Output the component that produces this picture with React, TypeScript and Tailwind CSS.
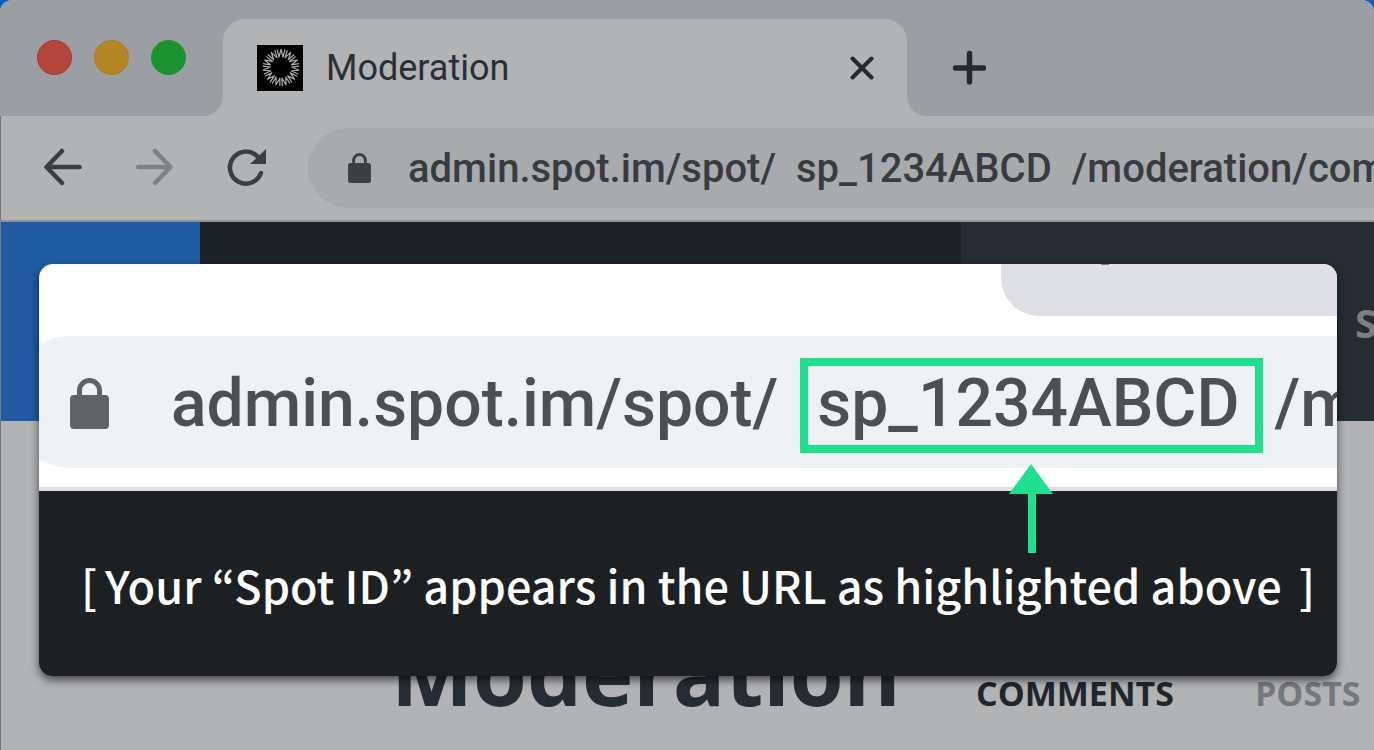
import React from 'react';

const TRAFFIC_LIGHTS = [
  { label: 'Close window', color: 'bg-[#b3453f] border-[#ae3530]' },
  { label: 'Minimize window', color: 'bg-[#b38623] border-[#a87f1e]' },
  { label: 'Zoom window', color: 'bg-[#1b9130] border-[#109a26]' },
];

// ring of eleven W shaped rays, the first one pointing straight up
const RAYS = Array.from({ length: 11 }, (_, i) => (i * 360) / 11);

const Logo = () => (
  <svg viewBox="0 0 46 46" className="size-[46px] bg-black" aria-hidden="true">
    <g fill="none" stroke="#a9aaac" strokeWidth="1.2" strokeLinejoin="round">
      {RAYS.map((angle) => (
        <path
          key={angle}
          d="M20 4.500 22 12 24 4.500 26 12 28 4.500"
          transform={`rotate(${angle} 24 22.500)`}
        />
      ))}
    </g>
  </svg>
);

const Lock = ({ className }: { className: string }) => (
  <svg viewBox="0 0 39 51" className={className} aria-hidden="true">
    <rect x="0" y="17" width="39" height="34" rx="4" fill="currentColor" />
    <path
      d="M9.500 18V12.500a10 10 0 0 1 20 0V18"
      fill="none"
      stroke="currentColor"
      strokeWidth="5"
    />
  </svg>
);

const TabStrip = () => (
  <div className="flex h-[116px] shrink-0 overflow-hidden rounded-t-xl bg-[#b2b3b5]">
    <div className="flex w-[223px] shrink-0 gap-[22px] rounded-br-[20px] bg-[#9b9ea3] pl-[37px] pt-[40px]">
      {TRAFFIC_LIGHTS.map((light) => (
        <button
          key={light.label}
          aria-label={light.label}
          className={`size-[35px] rounded-full border ${light.color}`}
        />
      ))}
    </div>
    <div className="flex w-[684px] shrink-0 bg-[#9b9ea3]">
      <div className="mt-[19px] flex flex-1 items-start rounded-t-[22px] bg-[#b2b3b5] pl-[34px] pr-[33px] pt-[26px]">
        <Logo />
        <span className="ml-[23px] flex-1 text-[36px] leading-[46px] text-[#2a2f34]">
          Moderation
        </span>
        <button aria-label="Close tab" className="mt-[11px]">
          <svg viewBox="0 0 24 24" className="size-6" fill="none" stroke="#262a2e" strokeWidth="4" strokeLinecap="round">
            <path d="M2.500 2.500 21.500 21.500M21.500 2.500 2.500 21.500" />
          </svg>
        </button>
      </div>
    </div>
    <div className="flex-1 rounded-bl-[20px] bg-[#9b9ea3] pl-[45px] pt-[50px]">
      <button aria-label="New tab">
        <svg viewBox="0 0 34 36" className="h-[36px] w-[34px]" fill="none" stroke="#262a2e" strokeWidth="5.500" strokeLinecap="round">
          <path d="M17.500 3.500V32M3.500 18H31.500" />
        </svg>
      </button>
    </div>
  </div>
);

const Toolbar = () => (
  <div className="flex h-[106px] shrink-0 items-start border-b-2 border-l border-b-[#919399] border-l-[#77797c] bg-[#b2b3b5] pt-3">
    <div className="flex h-20 w-[307px] shrink-0 items-center pb-0.5 pl-[42px] text-[#3b3f44]">
      <button aria-label="Back">
        <svg viewBox="0 0 40 38" className="h-[38px] w-10" fill="none" stroke="currentColor" strokeWidth="4.500" strokeLinecap="round" strokeLinejoin="round">
          <path d="M19 3 3.500 19 19 35M4 19H36.500" />
        </svg>
      </button>
      <button aria-label="Forward" className="ml-[52px] text-[#7f8184]">
        <svg viewBox="0 0 40 38" className="h-[38px] w-10" fill="none" stroke="currentColor" strokeWidth="4.500" strokeLinecap="round" strokeLinejoin="round">
          <path d="M20 3 35.500 19 20 35M35 19H3" />
        </svg>
      </button>
      <button aria-label="Reload" className="ml-[51px]">
        <svg viewBox="0 0 41 38" className="h-[38px] w-[41px]" fill="none" stroke="currentColor" strokeWidth="4.500" strokeLinecap="round">
          <path d="M35 25A16 16 0 1 1 31 8" />
          <path d="M40 1V16H24Z" fill="currentColor" stroke="none" />
        </svg>
      </button>
    </div>
    <div className="flex h-20 min-w-0 flex-1 items-center rounded-l-full bg-[#a7abae] pl-10">
      <Lock className="h-[30px] w-[23px] shrink-0 text-[#3d4043]" />
      <input
        aria-label="Address"
        readOnly
        value="admin.spot.im/spot/  sp_1234ABCD  /moderation/comments"
        className="ml-[37px] min-w-0 flex-1 bg-transparent pt-0.5 text-[40px] font-medium text-[#393c3f] outline-none"
      />
    </div>
  </div>
);

const Page = () => (
  <div className="flex flex-1 flex-col border-l border-[#77797c] font-['Open_Sans',sans-serif] font-bold">
    <div className="flex h-[199px] shrink-0">
      <div className="w-[199px] bg-[#205aa1]" />
      <div className="w-[761px] bg-[#1d2226]" />
      <div className="flex flex-1 items-center justify-end overflow-hidden bg-[#252c33] pt-0.5">
        <a href="#settings" className="w-[19px] text-[40px] text-[#7b7e82]">S</a>
      </div>
    </div>
    <div className="flex items-baseline overflow-hidden whitespace-nowrap bg-[#b2b3b5] pl-[390px] pt-[193px]">
      <h1 className="w-[585px] shrink-0 text-[87px] leading-[116px] text-[#252c33]">Moderation</h1>
      <a href="#comments" className="w-[279px] shrink-0 text-[34px] text-[#1f262c]">COMMENTS</a>
      <a href="#posts" className="text-[34px] text-[#75787c]">POSTS</a>
    </div>
  </div>
);

const Arrow = () => (
  <svg viewBox="0 0 44 89" className="absolute left-1/2 top-[98px] h-[89px] w-[44px] -translate-x-1/2" fill="#20e090" aria-hidden="true">
    <path d="M22 0 44 30H27V89H19V30H0Z" />
  </svg>
);

const Callout = () => (
  <section className="absolute left-[39px] right-[37px] top-[264px] overflow-hidden rounded-[14px] bg-[#1c2023] shadow-[0_4px_8px_rgba(0,0,0,0.6)]">
    <div className="border-b-4 border-[#dddfe3] bg-white pb-[19px]">
      <div className="flex h-[72px] justify-end">
        <div className="h-[52px] w-[336px] rounded-bl-[38px] bg-[#dfe0e5] pl-[100px]">
          <div className="h-px w-2 bg-[#77797c]" />
        </div>
      </div>
      <div className="-ml-[34px] flex h-[132px] items-center whitespace-pre rounded-l-full bg-[#eef2f4] pl-[65px] pt-0.5 text-[66px] font-medium text-[#4d4f52]">
        <Lock className="mr-[62px] h-[51px] w-[39px] shrink-0 text-[#616264]" />
        <span>admin.spot.im/spot/</span>
        <span className="relative ml-[22px] mt-1 flex h-[95px] items-center border-8 border-[#20e090] pb-1 pl-[9px] pr-[15px]">
          sp_1234ABCD
          <Arrow />
        </span>
        <span className="ml-3">/moderation</span>
      </div>
    </div>
    <p className="flex h-[185px] whitespace-nowrap pl-[42px] pr-[22px] pt-[61px] font-['Noto_Sans_CJK_JP',sans-serif] text-[45px] font-medium leading-[65px] text-white">
      <span>[</span>
      <span className="ml-2">Your “Spot ID” appears in the URL as highlighted above</span>
      <span className="ml-auto">]</span>
    </p>
  </section>
);

const App = () => {
  return (
    <main className="relative flex min-h-screen flex-col overflow-hidden bg-[#b2b3b5] font-[Roboto,sans-serif]">
      <div className="shrink-0 bg-[#0a5bc8]">
        <TabStrip />
      </div>
      <Toolbar />
      <Page />
      <Callout />
    </main>
  );
};

export default App;
